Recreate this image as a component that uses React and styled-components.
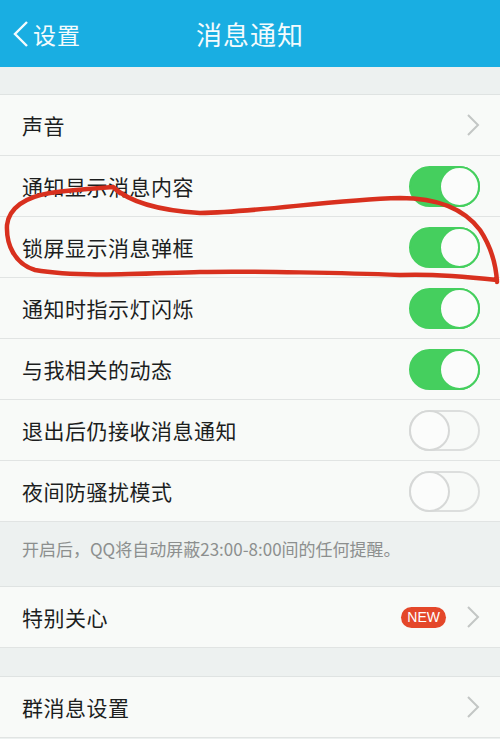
import React from "react";
import styled, { createGlobalStyle } from "styled-components";

const GlobalStyle = createGlobalStyle`
  html, body {
    margin: 0;
    padding: 0;
    background: #edf1f0;
  }
  * { box-sizing: border-box; }
`;

const Page = styled.div`
  position: relative;
  width: 500px;
  height: 739px;
  overflow: hidden;
  background: #edf1f0;
  font-family: "Noto Sans CJK SC", "Noto Sans", sans-serif;
`;

const Header = styled.header`
  position: relative;
  display: flex;
  align-items: center;
  justify-content: center;
  height: 67px;
  background: #19aee2;
  color: #f4fbfd;
`;

const Back = styled.div`
  position: absolute;
  left: 11px;
  top: 0;
  bottom: 0;
  display: flex;
  align-items: center;
  gap: 2px;
  font-size: 23px;
  letter-spacing: 1px;
`;

const Title = styled.h1`
  margin: 0;
  font-size: 26px;
  font-weight: 400;
  letter-spacing: 1px;
`;

const Gap = styled.div`
  height: ${({ h }) => h}px;
  border-bottom: 1px solid #dfe3e2;
`;

const Group = styled.div`
  background: #f8faf8;
`;

const Row = styled.div`
  display: flex;
  align-items: center;
  height: ${({ h }) => h || 61}px;
  padding: 0 20px 0 22px;
  border-bottom: 1px solid #e1e4e3;
`;

const Label = styled.span`
  flex: 1;
  font-size: 21px;
  color: #1c1e1e;
  letter-spacing: 0.5px;
`;

const Track = styled.div`
  position: relative;
  width: 71px;
  height: 41px;
  border-radius: 21px;
  background: ${({ on }) => (on ? "#45cf5e" : "#f8faf8")};
  border: 2px solid ${({ on }) => (on ? "#45cf5e" : "#dcdedd")};
`;

const Knob = styled.div`
  position: absolute;
  top: -2px;
  ${({ on }) => (on ? "right: -2px;" : "left: -2px;")}
  width: 41px;
  height: 41px;
  border-radius: 50%;
  background: #fbfcfb;
  border: 2px solid ${({ on }) => (on ? "#45cf5e" : "#d6d8d7")};
`;

const Chevron = styled.svg`
  width: 14px;
  height: 24px;
`;

const Badge = styled.span`
  margin-right: 20px;
  padding: 0 6px;
  height: 21px;
  line-height: 21px;
  border-radius: 11px;
  background: #e4472a;
  color: #fff;
  font-family: "Liberation Sans", Arial, sans-serif;
  font-size: 14px;
`;

const Note = styled.div`
  height: 65px;
  padding: 14px 22px 0;
  font-size: 17px;
  color: #8c8f8e;
  border-bottom: 1px solid #dfe3e2;
`;

const Scribble = styled.svg`
  position: absolute;
  left: 0;
  top: 0;
  width: 500px;
  height: 739px;
  pointer-events: none;
`;

const Toggle = ({ on }) => (
  <Track on={on}>
    <Knob on={on} />
  </Track>
);

const Arrow = () => (
  <Chevron viewBox="0 0 14 24">
    <path d="M2 2 L12 12 L2 22" fill="none" stroke="#c3c6c5" strokeWidth="2" />
  </Chevron>
);

const switches = [
  ["通知显示消息内容", true],
  ["锁屏显示消息弹框", true],
  ["通知时指示灯闪烁", true],
  ["与我相关的动态", true],
  ["退出后仍接收消息通知", false],
  ["夜间防骚扰模式", false],
];

export default function App() {
  return (
    <Page>
      <GlobalStyle />
      <Header>
        <Back>
          <svg width="20" height="30" viewBox="0 0 20 30">
            <path d="M16 3 L4 15 L16 27" fill="none" stroke="#f4fbfd" strokeWidth="2.4" />
          </svg>
          设置
        </Back>
        <Title>消息通知</Title>
      </Header>
      <Gap h={28} />
      <Group>
        <Row>
          <Label>声音</Label>
          <Arrow />
        </Row>
        {switches.map(([text, on]) => (
          <Row key={text}>
            <Label>{text}</Label>
            <Toggle on={on} />
          </Row>
        ))}
      </Group>
      <Note>开启后，QQ将自动屏蔽23:00-8:00间的任何提醒。</Note>
      <Group>
        <Row>
          <Label>特别关心</Label>
          <Badge>NEW</Badge>
          <Arrow />
        </Row>
      </Group>
      <Gap h={29} />
      <Group>
        <Row>
          <Label>群消息设置</Label>
          <Arrow />
        </Row>
      </Group>
      <Scribble viewBox="0 0 500 739">
        <path
          d="M113 187 C125 198 150 210 200 213 C260 212 330 200 400 198 C440 198 465 210 480 230 C492 248 496 265 497 282
             M497 280 C460 276 420 274 400 275 C350 273 250 271 200 272 C150 273 80 278 35 270 C15 264 6 245 7 225 C9 208 25 197 50 193 C75 189 100 188 113 187 L120 193"
          fill="none"
          stroke="#d8301e"
          strokeWidth="4.5"
          strokeLinecap="round"
          strokeLinejoin="round"
        />
      </Scribble>
    </Page>
  );
}
